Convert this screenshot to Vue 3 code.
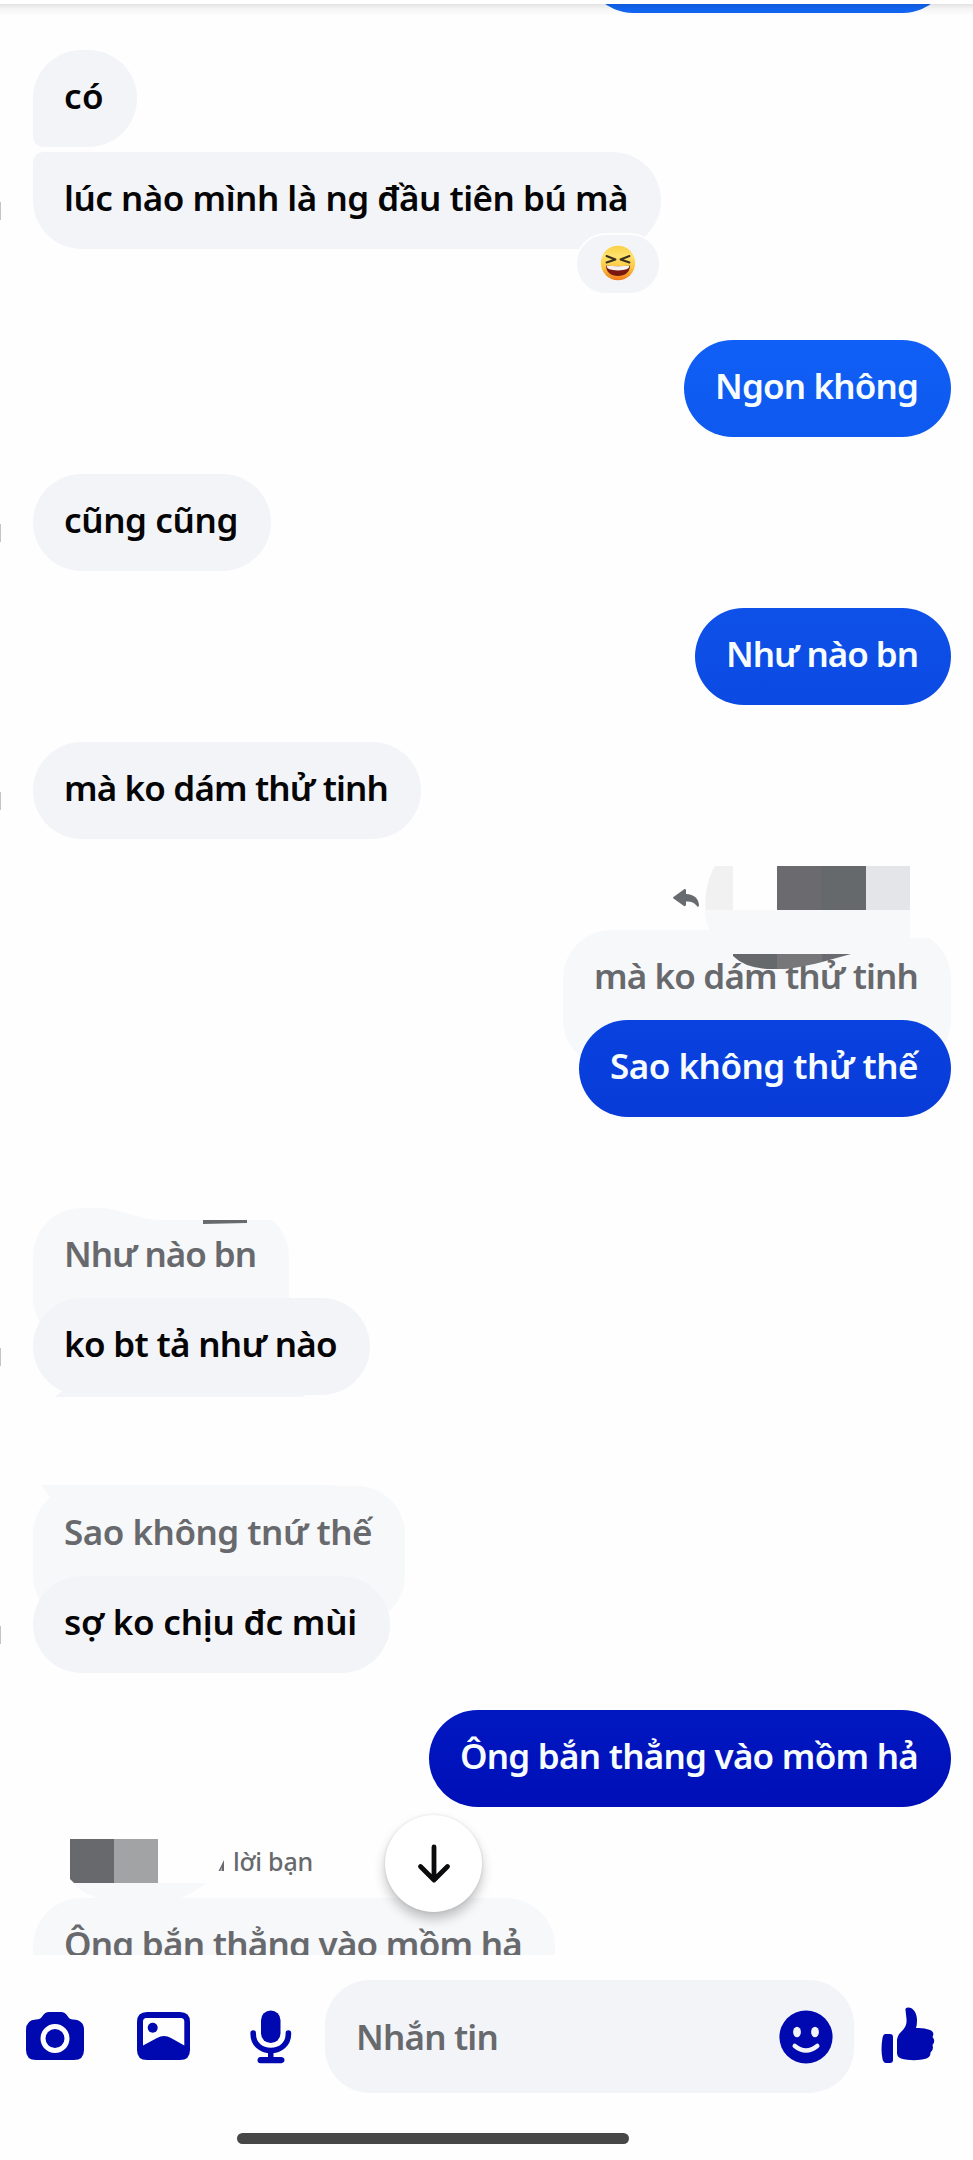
<script setup>
// Spreads a label's letters so that it fills the inner width of its bubble.
const vFit = {
  mounted(el, { value }) {
    const chars = Array.from(el.textContent).length
    const natural = el.getBoundingClientRect().width
    el.style.letterSpacing = (value - natural) / chars + 'px'
  }
}

const PAD = 64
const messages = [
  { id: 1, side: 'in', text: 'có', width: 104, gap: 50, shape: 'first' },
  { id: 2, side: 'in', text: 'lúc nào mình là ng đầu tiên bú mà', width: 628, gap: 5, shape: 'last', reaction: true, avatar: true },
  { id: 3, side: 'out', tone: 'a', text: 'Ngon không', width: 267, gap: 91 },
  { id: 4, side: 'in', text: 'cũng cũng', width: 238, gap: 37, avatar: true },
  { id: 5, side: 'out', tone: 'b', text: 'Như nào bn', width: 256, gap: 37 },
  { id: 6, side: 'in', text: 'mà ko dám thử tinh', width: 388, gap: 37, avatar: true },
  { id: 7, side: 'out', tone: 'c', text: 'Sao không thử thế', width: 372, gap: 91, quote: 'mà ko dám thử tinh', quoteWidth: 388, art: 'reply' },
  { id: 8, side: 'in', text: 'ko bt tả như nào', width: 337, gap: 91, quote: 'Như nào bn', quoteWidth: 256, art: 'wave', avatar: true },
  { id: 9, side: 'in', text: 'sợ ko chịu đc mùi', width: 357, gap: 91, quote: 'Sao không tnứ thế', quoteWidth: 372, art: 'corner', avatar: true },
  { id: 10, side: 'out', tone: 'd', text: 'Ông bắn thẳng vào mồm hả', width: 522, gap: 37 },
  { id: 11, side: 'in', quote: 'Ông bắn thẳng vào mồm hả', quoteWidth: 522, gap: 91, art: 'header' }
]
</script>

<template>
  <main class="screen">
    <section class="thread">
      <div class="peek"></div>
      <div class="top-shadow"></div>
      <article v-for="m in messages" :key="m.id" class="message" :class="m.side" :style="{ marginTop: m.gap + 'px' }">
        <div v-if="m.quote" class="bubble quote" :style="{ width: m.quoteWidth + 'px' }">
          <span v-fit="m.quoteWidth - PAD" class="label">{{ m.quote }}</span>
        </div>

        <svg v-if="m.art === 'reply'" class="art art-reply" width="280" height="112" viewBox="0 0 280 112">
          <path d="M3.500 36L14.500 28Q15.500 27.500 16 29V33C24 33 29 38 29 44.500Q28 47 26.500 44.500C24 41 20 40 16 40.500V44Q15.500 45.500 14 45L3.500 37.500Q2.500 36.700 3.500 36Z" fill="#676a6e" />
          <path d="M45 5H63V50H35.500C34 31 39 15 45 5Z" fill="#f1f1f1" />
          <path d="M35 49H240V78C248 77 255 77 259 78L256 90H47V80C38 69 35 60 35 49Z" fill="#f7f8fa" />
          <path d="M107 5H151V49H107Z" fill="#6b6b6f" />
          <path d="M151 5H196V49H151Z" fill="#66696c" />
          <path d="M196 5H240V49H196Z" fill="#e4e5e8" />
          <path d="M258 68H282V92Q271 78 259 77H240V68Z" fill="#fefefe" />
          <path d="M63 93H107V108Q77 109 63 95Z" fill="#66696c" />
          <path d="M107 93H152V101Q121 109 107 108Z" fill="#77777a" />
          <path d="M152 93H181L152 101Z" fill="#6b6a71" />
        </svg>
        <svg v-else-if="m.art === 'wave'" class="art art-wave" width="260" height="40" viewBox="0 0 260 40">
          <path d="M70 0H260V34Q252 20 238 12H127C108 12 90 2 70 0Z" fill="#fefefe" />
          <path d="M170 12H214V15L170 16Z" fill="#696a6e" />
        </svg>
        <svg v-else-if="m.art === 'corner'" class="art art-corner" width="310" height="14" viewBox="0 0 310 14">
          <path d="M8 0H302V3H60L18 13Z" fill="#f7f8fa" />
        </svg>
        <div v-else-if="m.art === 'header'" class="art art-header">
          <svg width="195" height="64" viewBox="0 0 195 64">
            <path d="M40 48H173Q161 58 147 63H64Q48 57 40 48Z" fill="#f7f8fa" />
            <path d="M37 4H81V48H41L37 44Z" fill="#68696d" />
            <path d="M81 4H125V48H81Z" fill="#a2a3a5" />
            <path d="M191 25V36H188.500V32L187.500 36H185.500Z" fill="#68696d" />
          </svg>
          <span v-fit="80" class="replied">lời bạn</span>
        </div>

        <div v-if="m.text" class="bubble" :class="[m.tone, m.shape, { stacked: m.quote }]" :style="{ width: m.width + 'px' }">
          <span v-fit="m.width - PAD" class="label">{{ m.text }}</span>
          <div v-if="m.reaction" class="reaction">
            <svg width="36" height="36" viewBox="0 0 36 36">
              <defs>
                <linearGradient id="face" x1="0" y1="0" x2="0" y2="1">
                  <stop offset="0" stop-color="#fbd044" />
                  <stop offset=".3" stop-color="#ffe26e" />
                  <stop offset=".65" stop-color="#fbc63f" />
                  <stop offset="1" stop-color="#f0771a" />
                </linearGradient>
              </defs>
              <circle cx="18" cy="18" r="17.200" fill="url(#face)" />
              <path d="M6.500 11L15.500 14.500L6.500 17.500M29.500 11L20.500 14.500L29.500 17.500" fill="none" stroke="#3b3220" stroke-width="1.900" stroke-linecap="round" stroke-linejoin="round" />
              <path d="M6 20.500Q18 22 30 20.500C30 27 25 31 18 31S6 27 6 20.500Z" fill="#7a170f" />
              <path d="M6.500 20.600Q18 22 29.500 20.600Q29.500 25.500 18 25.500T6.500 20.600Z" fill="#f4f1ee" />
            </svg>
          </div>
        </div>
        <svg v-if="m.art === 'wave'" class="art art-tail" width="260" height="8" viewBox="0 0 260 8">
          <path d="M7 2H245L250 8H0Z" fill="#f4f5f9" />
        </svg>
        <i v-if="m.avatar" class="avatar"></i>
      </article>

      <button class="to-bottom" aria-label="↓">
        <svg width="34" height="42" viewBox="0 0 34 42">
          <path d="M17 4V37M3.500 23.500L17 37L30.500 23.500" fill="none" stroke="#0b0c0d" stroke-width="4.800" stroke-linecap="round" stroke-linejoin="round" />
        </svg>
      </button>
    </section>

    <footer class="composer">
      <svg class="camera" width="58" height="50" viewBox="0 0 58 50">
        <path d="M23 1H35Q39 1 41.500 5Q43.500 8.500 47 8.500Q58 9 58 19V39Q58 49 48 49H10Q0 49 0 39V19Q0 9 10 8.500Q14.500 8.500 16.500 5Q19 1 23 1Z" />
        <circle cx="29" cy="27.500" r="12" class="hole" />
      </svg>
      <svg class="gallery" width="53" height="50" viewBox="0 0 53 50">
        <path fill-rule="evenodd" d="M10 1H43Q53 1 53 11V39Q53 49 43 49H10Q0 49 0 39V11Q0 1 10 1ZM9.500 7Q6 7 6 10.500V34.500L20 27Q27 23 34 27L47.300 34.500V10.500Q47.300 7 44 7Z" />
        <circle cx="15.700" cy="16.700" r="5" />
      </svg>
      <svg class="mic" width="42" height="54" viewBox="0 0 42 54">
        <rect x="11" y="0.500" width="19.500" height="32.500" rx="9.750" />
        <path d="M3.200 23V24C3.200 34 11 40.500 20.800 40.500S38.400 34 38.400 24V23" fill="none" stroke="#0008af" stroke-width="5.600" stroke-linecap="round" />
        <path d="M18 40H23.500V47H31.500Q34.500 47.500 34.500 50T31.500 53.200H10.500Q7.500 53 7.500 50.200T10.500 47H18Z" />
      </svg>
      <div class="field">
        <span v-fit="142" class="placeholder">Nhắn tin</span>
        <svg width="54" height="54" viewBox="0 0 54 54">
          <circle cx="27" cy="27" r="26.600" />
          <ellipse cx="18" cy="22" rx="3.900" ry="5.200" fill="#f3f4f8" />
          <ellipse cx="36" cy="22" rx="3.900" ry="5.200" fill="#f3f4f8" />
          <path d="M15.800 36Q27 45 38.200 36" fill="none" stroke="#f3f4f8" stroke-width="4.600" stroke-linecap="round" />
        </svg>
      </div>
      <svg class="like" width="54" height="56" viewBox="0 0 54 56">
        <path d="M4.500 27H9Q12 27 12 30V53Q12 56 9 56H5Q2.500 56 1.500 52Q-.5 42 1.500 31Q2.200 27 4.500 27Z" />
        <path d="M24.500 3Q24 .5 27 .5C33 .5 36 7 36 13.500Q36 18 35 21Q43 20.500 49 23Q54 25 51.500 30Q55 34 51.500 38Q53 43 49.500 45.500Q49.500 50 45.500 51.500C37 54 27 53.500 20 51.500Q16 50 16 46V34Q16 29 19.500 25.500C24 21 26 18 25.500 12Z" />
      </svg>
    </footer>
    <div class="home-bar"></div>
  </main>
</template>

<style>
body {
  background: #fefefe;
}
</style>

<style scoped>
.screen {
  display: flex;
  flex-direction: column;
  width: 973px;
  height: 2160px;
  overflow: hidden;
  background: #fefefe;
  font-family: "Noto Sans", "Open Sans", sans-serif;
}
.thread {
  position: relative;
  height: 1955px;
  flex: none;
  overflow: hidden;
}
.thread::before {
  content: "";
  display: table;
}
.peek {
  position: absolute;
  top: -84px;
  right: 22px;
  width: 366px;
  height: 97px;
  border-radius: 48px;
  background: #1267f5;
}
.top-shadow {
  position: absolute;
  inset: 0 0 auto;
  height: 16px;
  background: linear-gradient(#fefefe 4px, rgba(0, 0, 0, .11) 4px, rgba(0, 0, 0, .035) 9px, transparent);
}
.message {
  position: relative;
  display: flex;
  flex-direction: column;
  align-items: flex-start;
  padding: 0 22px 0 33px;
}
.message.out {
  align-items: flex-end;
}
.bubble {
  position: relative;
  box-sizing: border-box;
  height: 97px;
  padding-left: 31px;
  border-radius: 48.500px;
  background: #f3f4f8;
  color: #050506;
}
.label {
  display: inline-block;
  white-space: pre;
  font-size: 35px;
  font-weight: 600;
  line-height: 48px;
  margin-top: 22px;
}
.out .bubble {
  color: #f7fdff;
}
.bubble.a { background: linear-gradient(#105ff6, #0e59ef); }
.bubble.b { background: linear-gradient(#0e51e9, #0b4ae3); }
.bubble.c { background: linear-gradient(#0942df, #083bd8); }
.bubble.d { background: linear-gradient(#0118c1, #000fb7); }
.bubble.first { border-bottom-left-radius: 10px; }
.bubble.last { border-top-left-radius: 10px; }
.bubble.quote,
.out .bubble.quote {
  height: 138px;
  background: #f7f8fa;
  color: #67696d;
}
.bubble.stacked {
  margin-top: -48px;
}
.reaction {
  position: absolute;
  top: 81px;
  right: 0;
  display: flex;
  justify-content: center;
  box-sizing: border-box;
  width: 86px;
  height: 62px;
  padding-top: 10px;
  border: 2px solid #fefefe;
  border-radius: 31px;
  background: #f3f4f8;
}
.avatar {
  position: absolute;
  left: 0;
  bottom: 29px;
  width: 1px;
  height: 18px;
  background: #c4c4c6;
}
.art {
  position: absolute;
}
.art-reply { left: 670px; top: -69px; }
.art-wave { left: 33px; top: 0; }
.art-tail { left: 55px; bottom: -2px; }
.art-corner { left: 33px; top: -1px; }
.art-header {
  left: 33px;
  top: -63px;
  display: flex;
}
.replied {
  margin: 9px 0 0 5px;
  align-self: flex-start;
  white-space: pre;
  font-size: 25px;
  font-weight: 500;
  line-height: 34px;
  color: #67696d;
}
.to-bottom {
  position: absolute;
  left: 385px;
  top: 1815px;
  display: flex;
  align-items: center;
  justify-content: center;
  width: 97px;
  height: 97px;
  padding: 0;
  border: 0;
  border-radius: 50%;
  background: #fff;
  box-shadow: 0 7px 12px rgba(0, 0, 0, .24), 0 0 3px rgba(0, 0, 0, .1);
}
.composer {
  display: flex;
  align-items: center;
  flex: none;
  height: 113px;
  margin-top: 25px;
  padding-left: 26px;
  fill: #0008af;
}
.composer svg {
  flex: none;
}
.hole {
  stroke: #fefefe;
  stroke-width: 5px;
}
.gallery { margin-left: 52.500px; }
.mic { margin-left: 60.500px; }
.camera, .gallery { margin-bottom: 2px; }
.field {
  display: flex;
  align-items: center;
  justify-content: space-between;
  box-sizing: border-box;
  width: 529px;
  height: 113px;
  margin-left: 33px;
  padding: 0 21px 0 31px;
  border-radius: 45px;
  background: #f3f4f8;
}
.placeholder {
  white-space: pre;
  font-size: 35px;
  font-weight: 600;
  line-height: 48px;
  color: #67696d;
}
.like {
  margin: 0 0 4px 27px;
}
.home-bar {
  flex: none;
  width: 392px;
  height: 11px;
  margin: 40px 0 0 237px;
  border-radius: 6px;
  background: #474747;
}
</style>
